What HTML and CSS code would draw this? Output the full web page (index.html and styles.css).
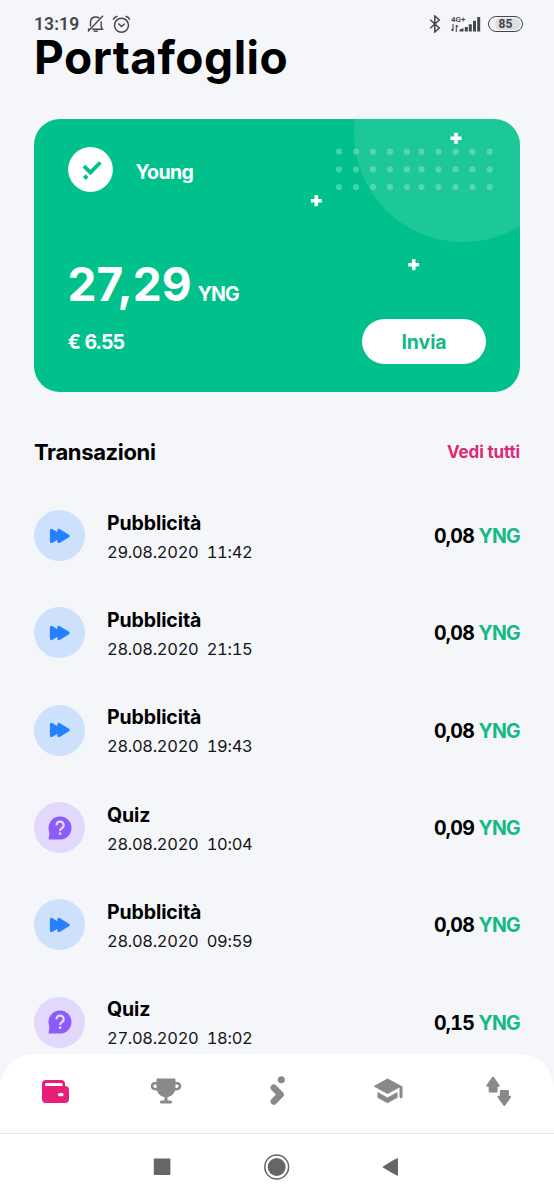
FILE: index.html
```html
<!DOCTYPE html>
<html lang="it">
<head>
<meta charset="utf-8">
<title>Portafoglio</title>
<link rel="stylesheet" href="styles.css">
</head>
<body>
<svg class="defs" aria-hidden="true">
  <symbol id="forward" viewBox="0 0 22 16"><path d="M2.400 2.400v11.200l7.400-4.400v4.400L19.200 8 9.800 2.400v4.400z" fill="#2680ff" stroke="#2680ff" stroke-width="3" stroke-linejoin="round"/></symbol>
  <symbol id="quiz" viewBox="0 0 24 24"><path d="M12 .5a11.500 11.500 0 1 1 0 23H.6l.8-7A11.500 11.500 0 0 1 12 .5z" fill="#8b5cf9"/><path d="M8.600 9.200a3.500 3.500 0 1 1 5.200 3c-1.300.8-1.700 1.300-1.700 2.700" fill="none" stroke="#e2d8fc" stroke-width="2.200"/><circle cx="12.100" cy="17.700" r="1.400" fill="#e2d8fc"/></symbol>
  <symbol id="plus" viewBox="0 0 12 12"><path d="M4.200.5h3.600v3.700h3.700v3.600H7.800v3.700H4.200V7.800H.5V4.200h3.700z" fill="#fff"/></symbol>
</svg>
<div class="screen">
  <header class="status">
    <span class="clock">13:19</span>
    <svg class="bell" viewBox="0 0 18 18"><g fill="none" stroke="#454649" stroke-width="1.400"><path d="M3.500 11.500V7.200C3.500 4 5.500 2 8.800 2c1.300 0 2.600.4 3.400 1.200M14.200 6.200v5.600l1.300 2.400H5.200M.9 16.500 16 .8M.9 14.200h2"/></g><path d="M6.200 15.400h5.200c-.7 2-4.500 2-5.200 0z" fill="#454649"/></svg>
    <svg class="alarm" viewBox="0 0 19 19"><g fill="none" stroke="#454649" stroke-width="1.500"><circle cx="9.500" cy="10.300" r="7"/><path d="m6.300 8.500 3.200 3 3.200-2.700M1.200 4.600Q2.500 2 5.500 1.300M17.800 4.600Q16.500 2 13.500 1.300"/></g></svg>
    <span class="spacer"></span>
    <svg class="bluetooth" viewBox="0 0 12 18"><path d="m1.200 4.800 9 8.200-4.400 4V1l4.400 4-9 8.200" fill="none" stroke="#454649" stroke-width="1.500"/></svg>
    <div class="signal">
      <div class="net"><span>4G+</span><svg viewBox="0 0 8 8"><path d="M2 0v7M.3 5 2 7M5.300 8V1M5.300 1 7 3" fill="none" stroke="#454649" stroke-width="1.100"/></svg></div>
      <svg class="bars" viewBox="0 0 22 16"><path d="M.5 15.500v-1.800l4-1.800v3.600zM5.800 11h3v4.500h-3zM9.800 8.200h3v7.300h-3zM14 4.700h3v10.800h-3zM18.200 1h3v14.500h-3z" fill="#454649"/></svg>
    </div>
    <div class="battery"><span>85</span></div>
  </header>
  <h1 class="title">Portafoglio</h1>

  <section class="card">
    <svg class="deco" viewBox="0 0 486 273">
      <circle cx="429" cy="14" r="109" fill="#fff" fill-opacity=".11"/>
      <g stroke="#fff" stroke-opacity=".26" stroke-width="6.200" stroke-linecap="round">
        <path id="dots" d="M305 32.700h0M322 32.700h0M339 32.700h0M356 32.700h0M373 32.700h0M387.500 32.700h0M404.500 32.700h0M421.500 32.700h0M438.500 32.700h0M455.700 32.700h0"/>
        <use href="#dots" y="17.700"/><use href="#dots" y="35.400"/>
      </g>
      <use href="#plus" x="416" y="13.300" width="12" height="12"/>
      <use href="#plus" x="276.300" y="75.700" width="12" height="12"/>
      <use href="#plus" x="373.700" y="139.700" width="12" height="12"/>
    </svg>
    <div class="wallet">
      <svg class="logo" viewBox="0 0 45 45"><circle cx="22.500" cy="22.500" r="22.400" fill="#fff"/><path d="m15.900 19.200 6.500 6.300 9.900-10" fill="none" stroke="#00c18c" stroke-width="3.900"/><path d="m17.700 27.300 2.800 2.800-2.800 2.800-2.800-2.800z" fill="#00c18c"/></svg>
      <span class="name">Young</span>
    </div>
    <div class="balance"><span class="amount">27,29</span><span class="unit">YNG</span></div>
    <div class="bottom"><span class="fiat">€ 6.55</span><span class="send">Invia</span></div>
  </section>

  <div class="heading"><h2>Transazioni</h2><a>Vedi tutti</a></div>

  <main class="list">
    <div class="row"><div class="badge ad"><svg><use href="#forward"/></svg></div><div class="info"><b>Pubblicità</b><span>29.08.2020&nbsp; 11:42</span></div><div class="value">0,08 <em>YNG</em></div></div>
    <div class="row"><div class="badge ad"><svg><use href="#forward"/></svg></div><div class="info"><b>Pubblicità</b><span>28.08.2020&nbsp; 21:15</span></div><div class="value">0,08 <em>YNG</em></div></div>
    <div class="row"><div class="badge ad"><svg><use href="#forward"/></svg></div><div class="info"><b>Pubblicità</b><span>28.08.2020&nbsp; 19:43</span></div><div class="value">0,08 <em>YNG</em></div></div>
    <div class="row"><div class="badge quiz"><svg><use href="#quiz"/></svg></div><div class="info"><b>Quiz</b><span>28.08.2020&nbsp; 10:04</span></div><div class="value">0,09 <em>YNG</em></div></div>
    <div class="row"><div class="badge ad"><svg><use href="#forward"/></svg></div><div class="info"><b>Pubblicità</b><span>28.08.2020&nbsp; 09:59</span></div><div class="value">0,08 <em>YNG</em></div></div>
    <div class="row"><div class="badge quiz"><svg><use href="#quiz"/></svg></div><div class="info"><b>Quiz</b><span>27.08.2020&nbsp; 18:02</span></div><div class="value">0,15 <em>YNG</em></div></div>
  </main>

  <nav class="tabs">
    <svg viewBox="0 0 32 32"><path d="M7 5h15a4 4 0 0 1 4 4v2a4 4 0 0 1 4 4v9a4 4 0 0 1-4 4H7a4 4 0 0 1-4-4V9a4 4 0 0 1 4-4z" fill="#e81f79"/><path d="M7.300 8H22q1.500 0 1.500 1.400V11H6.200V9.200Q6.200 8 7.300 8z" fill="#fff"/><rect x="19" y="18" width="5.500" height="3.300" rx="1.600" fill="#fff"/></svg>
    <svg viewBox="0 0 32 32"><path d="M6.500 4.500Q6.500 3.500 7.500 3.500h17q1 0 1 1V12c0 6-3.800 9.500-8 10v3.500h3.200q1.300 0 1.300 1.500t-1.300 1.500h-9.400Q10 28.500 10 27t1.300-1.500h3.200V22C10.300 21.500 6.500 18 6.500 12z" fill="#89898b"/><path d="M8 8.300H4.800A3 3 0 0 0 2 11.200c0 2.200 2 3 5 3M24 8.300h3.200a3 3 0 0 1 2.800 2.900c0 2.200-2 3-5 3" fill="none" stroke="#89898b" stroke-width="2.500"/></svg>
    <svg viewBox="0 0 32 32"><path d="m12.800 12.700 6.700 6.900-6.700 6.900" fill="none" stroke="#89898b" stroke-width="6.600" stroke-linecap="round" stroke-linejoin="round"/><circle cx="20.300" cy="4.800" r="3.500" fill="#89898b"/></svg>
    <svg viewBox="0 0 32 32"><path d="M15.500 3.600 1.500 11.300l14 7.700 12-6.600v9.300q0 1.500 1.500 1.500t1.500-1.500V11.500z" fill="#89898b"/><path d="M5.800 17.500v5.100l9.700 5.300 9.700-5.300v-5.100l-9.700 5.300z" fill="#89898b" stroke="#89898b" stroke-width=".6" stroke-linejoin="round"/></svg>
    <svg viewBox="0 0 32 32"><g fill="#89898b" stroke="#89898b" stroke-width="2" stroke-linejoin="round"><path d="m10 2.700 5.800 8.100h-2.200v5.800H6.700v-5.800H4.200z"/><path d="m21.300 29.900 5.800-8.100h-2.200V16h-7v5.800h-2.400z"/></g></svg>
  </nav>
  <footer class="system">
    <svg viewBox="0 0 30 30"><rect x="5.800" y="6.500" width="16.600" height="16.600" rx="1" fill="#666"/></svg>
    <svg viewBox="0 0 30 30"><circle cx="14.700" cy="15" r="11.900" fill="none" stroke="#666" stroke-width="1.500"/><circle cx="14.700" cy="15" r="9" fill="#666"/></svg>
    <svg viewBox="0 0 30 30"><path d="M22 6v18q-4-1.500-15-8.400-.8-.6 0-1.200Q18 7.500 22 6z" fill="#666"/></svg>
  </footer>
</div>
</body>
</html>
```
FILE: styles.css
```css
* { box-sizing: border-box; }
body { margin: 0; background: #f4f6fa; font-family: Inter, "Liberation Sans", sans-serif; color: #000; }
svg { display: block; flex: none; }
h1, h2 { margin: 0; }
.defs { position: absolute; width: 0; height: 0; }
.screen { width: 554px; height: 1200px; display: flex; flex-direction: column; overflow: hidden; }

.status { height: 34px; padding: 14px 31px 0 34px; display: flex; align-items: center; flex: none; color: #454649; font-family: Roboto, sans-serif; }
.clock { font-size: 17.5px; font-weight: 600; letter-spacing: .1px; line-height: 20px; width: 53px; }
.bell { width: 18px; height: 18px; }
.alarm { width: 19px; height: 19px; margin-left: 7px; }
.spacer { flex: 1; }
.bluetooth { width: 12px; height: 18px; }
.signal { display: flex; align-items: center; margin-left: 10px; }
.net { width: 8px; height: 16px; font-size: 8px; font-weight: 600; line-height: 8px; white-space: nowrap; }
.net svg { width: 8px; height: 8px; }
.bars { width: 22px; height: 16px; }
.battery { width: 35px; height: 16px; margin-left: 7px; padding: 1px; border: 1.5px solid #454649; border-radius: 8px; font-size: 12px; font-weight: 700; line-height: 13px; text-align: center; }
.battery span { display: block; height: 12px; background: #dcdee1; border-radius: 5px; margin: 0 1px 0 5px; padding-right: 4px; }

.title { font-size: 46px; line-height: 46px; font-weight: 750; letter-spacing: .5px; padding: 0 0 0 34px; height: 46px; flex: none; }

.card { position: relative; flex: none; height: 273px; margin: 39px 34px 0; padding: 28px 34px 0; background: #00c18c; border-radius: 26px; overflow: hidden; color: #fff; }
.deco { position: absolute; inset: 0; width: 486px; height: 273px; }
.wallet { display: flex; align-items: center; height: 45px; }
.logo { width: 45px; height: 45px; margin-left: -.5px; }
.name { font-size: 19.5px; font-weight: 650; letter-spacing: -.6px; line-height: 24px; margin: 5px 0 0 23px; }
.balance { display: flex; align-items: baseline; height: 56px; margin-top: 64px; line-height: 56px; }
.amount { font-size: 46px; font-weight: 700; margin-left: -.5px; }
.unit { font-size: 19.5px; font-weight: 650; letter-spacing: -.9px; margin-left: 6px; }
.bottom { display: flex; align-items: center; justify-content: space-between; height: 45px; margin-top: 7px; font-size: 19.5px; font-weight: 650; }
.fiat { letter-spacing: -1px; word-spacing: 1px; margin-left: -.5px; }
.send { width: 124px; height: 45px; border-radius: 23px; background: #fff; color: #16b986; text-align: center; line-height: 46px; letter-spacing: -.1px; }

.heading { display: flex; justify-content: space-between; align-items: center; flex: none; height: 30px; margin: 45px 34px 0; }
.heading h2 { font-size: 22px; font-weight: 650; letter-spacing: -.35px; line-height: 28px; padding-bottom: 1px; }
.heading a { font-size: 17px; font-weight: 650; letter-spacing: -.15px; color: #dc2976; }

.list { flex: 1; min-height: 0; padding: 20px 34px 0; }
.row { display: flex; align-items: center; height: 97.3px; }
.badge { width: 51px; height: 51px; border-radius: 50%; display: flex; align-items: center; justify-content: center; }
.badge.ad { background: #cde0fc; }
.badge.quiz { background: #e2d8fc; }
.ad svg { width: 22px; height: 16px; margin-left: 1px; }
.quiz svg { width: 24px; height: 24px; }
.info { flex: 1; margin-left: 22px; display: flex; flex-direction: column; gap: 5px; padding-top: 3.4px; }
.info b { font-size: 19.5px; font-weight: 650; letter-spacing: -.1px; line-height: 24px; }
.info span { font-size: 16.5px; font-variant-numeric: tabular-nums; letter-spacing: -.3px; line-height: 24px; color: #141416; }
.value { font-size: 19.5px; font-weight: 650; font-variant-numeric: tabular-nums; letter-spacing: -.75px; padding-top: 1px; }
.value em { font-style: normal; color: #16b986; }

.tabs { flex: none; height: 79px; background: #fff; border-radius: 34px 34px 0 0; display: flex; align-items: center; justify-content: space-around; padding-bottom: 5px; }
.tabs svg { width: 32px; height: 32px; }
.system { flex: none; height: 67px; background: #fff; border-top: 1px solid #e9e9eb; display: flex; justify-content: center; gap: 84px; padding-top: 18px; }
.system svg { width: 30px; height: 30px; }
```
